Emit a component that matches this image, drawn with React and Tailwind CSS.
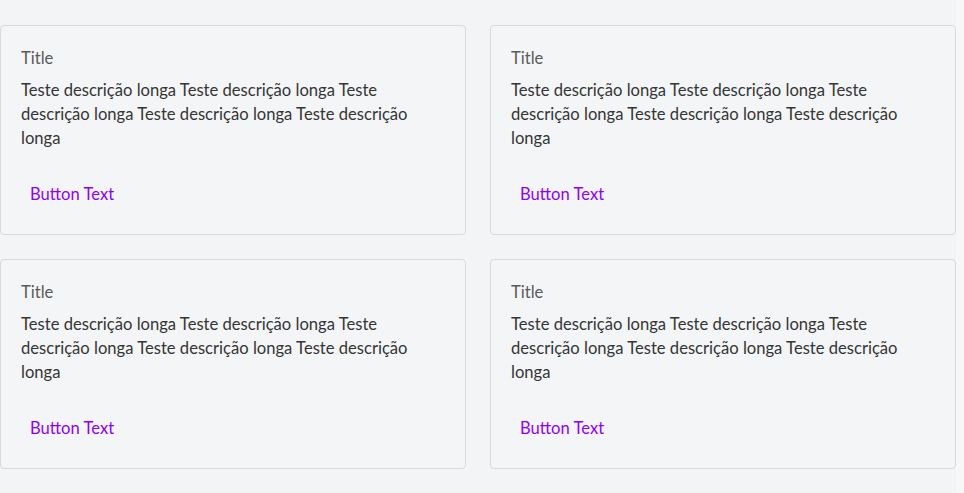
import React from "react";

const cards = [1, 2, 3, 4];

const Card = () => (
  <div className="bg-[#f4f5f7] border border-[#d8d9dd] rounded-[4px] pt-[20px] px-[20px] pb-[22px]">
    <h3 className="text-[16.6px] leading-[24px] text-[#5a5a5a]">Title</h3>
    <p className="mt-[8px] text-[16.6px] leading-[24px] text-[#353535]">
      Teste descrição longa Teste descrição longa Teste descrição longa Teste descrição longa Teste descrição longa
    </p>
    <div className="mt-[26px]">
      <button className="h-[36px] px-[9px] text-[16.6px] text-[#8f00f8] rounded-[4px]">Button Text</button>
    </div>
  </div>
);

export default function App() {
  return (
    <div className="flex h-[493px] overflow-hidden bg-[#f3f4f6] font-['Lato',sans-serif]">
      <div className="flex-1 pt-[25px]">
        <div className="grid grid-cols-2 gap-[24px]">
          {cards.map((c) => (
            <Card key={c} />
          ))}
        </div>
      </div>
      <div className="w-[8px] bg-[#f7f7f8]"></div>
    </div>
  );
}
